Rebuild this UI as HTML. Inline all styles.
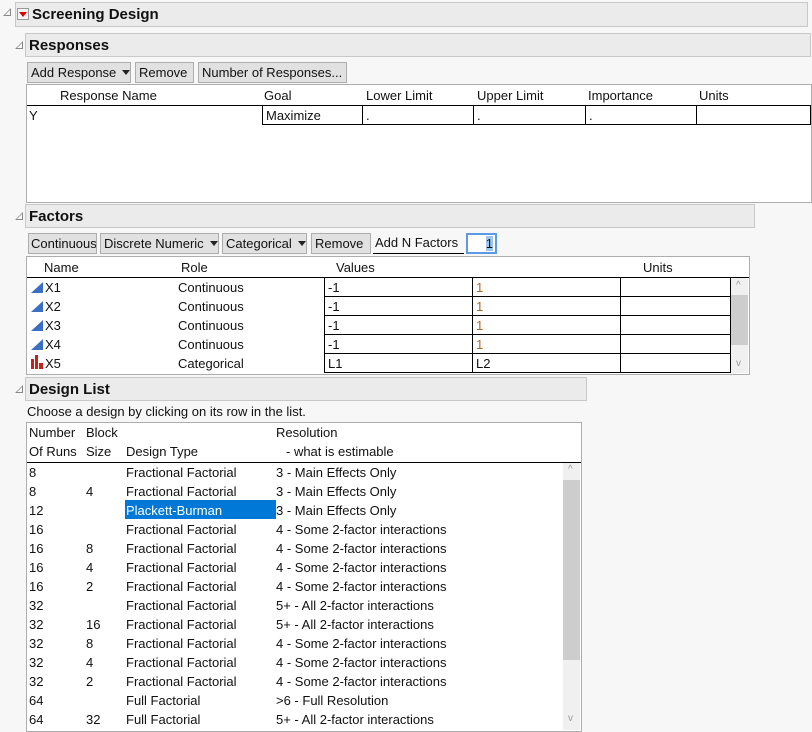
<!DOCTYPE html>
<html><head><style>
*{box-sizing:border-box;margin:0;padding:0}
body{width:812px;height:731px;background:#f7f7f7;font-family:"Liberation Sans",sans-serif;font-size:13px;color:#111;position:relative;overflow:hidden}
.a{position:absolute;white-space:nowrap}
.hdr{position:absolute;background:#ebebeb;border:1px solid #c8c8c8;font-weight:bold;font-size:15px;padding-left:3px;line-height:23px;white-space:nowrap}
.tri{position:absolute;width:0;height:0;border-left:8px solid transparent;border-bottom:8px solid #888}
.tri:after{content:"";position:absolute;left:-6px;top:2px;border-left:5px solid transparent;border-bottom:5px solid #f7f7f7}
.btn{position:absolute;background:#e1e1e1;border:1px solid #adadad;height:21px;line-height:19px;padding:0 3px;white-space:nowrap;overflow:hidden}
.box{position:absolute;background:#fff;border:1px solid #adadad}
.dd:after{content:"";display:inline-block;margin-left:6px;border-left:4px solid transparent;border-right:4px solid transparent;border-top:5px solid #222;vertical-align:2px}
.cell{position:absolute;border:1px solid #000;background:#fff;height:20px;line-height:19px;padding-left:3px}
.hl{position:absolute;height:1px;background:#000}
.o{color:#b5651d}
</style></head><body>

<div class="tri" style="left:3px;top:8px"></div>
<div class="hdr" style="left:15px;top:2px;width:793px;height:25px;padding-left:16px">Screening Design</div>
<div class="a" style="left:17px;top:8px;width:12px;height:12px;border:1px solid #999;background:#f4f4f4"></div>
<div class="a" style="left:19px;top:12px;border-left:4px solid transparent;border-right:4px solid transparent;border-top:5px solid #d00"></div>

<div class="tri" style="left:15px;top:41px"></div>
<div class="hdr" style="left:25px;top:33px;width:786px;height:24px">Responses</div>
<div class="btn dd" style="left:27px;top:62px;width:104px">Add Response</div>
<div class="btn" style="left:135px;top:62px;width:59px">Remove</div>
<div class="btn" style="left:198px;top:62px;width:149px">Number of Responses...</div>
<div class="box" style="left:26px;top:84px;width:786px;height:119px"></div>
<div class="a" style="left:60px;top:88px">Response Name</div>
<div class="a" style="left:264px;top:88px">Goal</div>
<div class="a" style="left:366px;top:88px">Lower Limit</div>
<div class="a" style="left:477px;top:88px">Upper Limit</div>
<div class="a" style="left:588px;top:88px">Importance</div>
<div class="a" style="left:699px;top:88px">Units</div>
<div class="hl" style="left:27px;top:105px;width:784px"></div>
<div class="a" style="left:29px;top:108px">Y</div>
<div class="cell" style="left:262px;top:105px;width:101px">Maximize</div>
<div class="cell" style="left:362px;top:105px;width:112px">.</div>
<div class="cell" style="left:473px;top:105px;width:113px">.</div>
<div class="cell" style="left:585px;top:105px;width:112px">.</div>
<div class="cell" style="left:696px;top:105px;width:115px"></div>

<div class="tri" style="left:15px;top:212px"></div>
<div class="hdr" style="left:25px;top:204px;width:730px;height:24px">Factors</div>
<div class="btn" style="left:28px;top:233px;width:69px;padding:0 2px">Continuous</div>
<div class="btn dd" style="left:100px;top:233px;width:119px">Discrete Numeric</div>
<div class="btn dd" style="left:222px;top:233px;width:85px">Categorical</div>
<div class="btn" style="left:311px;top:233px;width:60px">Remove</div>
<div class="a" style="left:373px;top:233px;width:91px;height:21px;line-height:19px;padding-left:2px;border-bottom:1px solid #000">Add N Factors</div>
<div class="a" style="left:466px;top:233px;width:31px;height:21px;border:2px solid #5a9ae6;background:#fff;text-align:right;line-height:17px;padding-right:2px"><span style="background:#9ec7f0">1</span></div>
<div class="box" style="left:26px;top:256px;width:724px;height:119px"></div>
<div class="a" style="left:44px;top:260px">Name</div>
<div class="a" style="left:181px;top:260px">Role</div>
<div class="a" style="left:336px;top:260px">Values</div>
<div class="a" style="left:643px;top:260px">Units</div>
<div class="hl" style="left:27px;top:277px;width:722px"></div>
<div class="a" style="left:731px;top:278px;width:17px;height:95px;background:#f0f0f0"></div>
<div class="a" style="left:731px;top:295px;width:17px;height:50px;background:#cdcdcd"></div>
<div class="a" style="left:736px;top:280px;color:#999;font-size:10px">^</div>
<div class="a" style="left:736px;top:358px;color:#999;font-size:10px">v</div>

<svg class="a" style="left:30px;top:281px" width="14" height="90">
<polygon points="1,12 13,1 13,12" fill="#3a6fc4"/>
<polygon points="1,31 13,20 13,31" fill="#3a6fc4"/>
<polygon points="1,50 13,39 13,50" fill="#3a6fc4"/>
<polygon points="1,69 13,58 13,69" fill="#3a6fc4"/>
<rect x="1" y="78" width="3" height="10" fill="#c8201a"/><rect x="5" y="74" width="3" height="14" fill="#c8201a"/><rect x="9" y="82" width="4" height="6" fill="#c8201a"/>
</svg>
<div class="a" style="left:45px;top:280px">X1</div>
<div class="a" style="left:45px;top:299px">X2</div>
<div class="a" style="left:45px;top:318px">X3</div>
<div class="a" style="left:45px;top:337px">X4</div>
<div class="a" style="left:45px;top:356px">X5</div>
<div class="a" style="left:178px;top:280px">Continuous</div>
<div class="a" style="left:178px;top:299px">Continuous</div>
<div class="a" style="left:178px;top:318px">Continuous</div>
<div class="a" style="left:178px;top:337px">Continuous</div>
<div class="a" style="left:178px;top:356px">Categorical</div>

<div class="cell" style="left:324px;top:277px;width:149px">-1</div>
<div class="cell o" style="left:472px;top:277px;width:149px">1</div>
<div class="cell" style="left:620px;top:277px;width:111px"></div>
<div class="cell" style="left:324px;top:296px;width:149px">-1</div>
<div class="cell o" style="left:472px;top:296px;width:149px">1</div>
<div class="cell" style="left:620px;top:296px;width:111px"></div>
<div class="cell" style="left:324px;top:315px;width:149px">-1</div>
<div class="cell o" style="left:472px;top:315px;width:149px">1</div>
<div class="cell" style="left:620px;top:315px;width:111px"></div>
<div class="cell" style="left:324px;top:334px;width:149px">-1</div>
<div class="cell o" style="left:472px;top:334px;width:149px">1</div>
<div class="cell" style="left:620px;top:334px;width:111px"></div>
<div class="cell" style="left:324px;top:353px;width:149px">L1</div>
<div class="cell" style="left:472px;top:353px;width:149px">L2</div>
<div class="cell" style="left:620px;top:353px;width:111px"></div>

<div class="tri" style="left:15px;top:385px"></div>
<div class="hdr" style="left:25px;top:377px;width:562px;height:24px">Design List</div>
<div class="a" style="left:27px;top:404px">Choose a design by clicking on its row in the list.</div>
<div class="box" style="left:26px;top:422px;width:556px;height:310px"></div>
<div class="a" style="left:29px;top:425px">Number</div>
<div class="a" style="left:86px;top:425px">Block</div>
<div class="a" style="left:276px;top:425px">Resolution</div>
<div class="a" style="left:29px;top:444px">Of Runs</div>
<div class="a" style="left:86px;top:444px">Size</div>
<div class="a" style="left:126px;top:444px">Design Type</div>
<div class="a" style="left:286px;top:444px">- what is estimable</div>
<div class="hl" style="left:27px;top:462px;width:554px"></div>
<div class="a" style="left:563px;top:463px;width:17px;height:267px;background:#f0f0f0"></div>
<div class="a" style="left:563px;top:480px;width:17px;height:180px;background:#cdcdcd"></div>
<div class="a" style="left:568px;top:464px;color:#999;font-size:10px">^</div>
<div class="a" style="left:568px;top:713px;color:#999;font-size:10px">v</div>
<div class="a" style="left:125px;top:500px;width:151px;height:19px;background:#0078d7"></div>
<div class="a" style="left:29px;top:463px;line-height:19px">8<br>8<br>12<br>16<br>16<br>16<br>16<br>32<br>32<br>32<br>32<br>32<br>64<br>64</div>
<div class="a" style="left:86px;top:463px;line-height:19px">&nbsp;<br>4<br>&nbsp;<br>&nbsp;<br>8<br>4<br>2<br>&nbsp;<br>16<br>8<br>4<br>2<br>&nbsp;<br>32</div>
<div class="a" style="left:126px;top:463px;line-height:19px">Fractional Factorial<br>Fractional Factorial<br><span style="color:#fff">Plackett-Burman</span><br>Fractional Factorial<br>Fractional Factorial<br>Fractional Factorial<br>Fractional Factorial<br>Fractional Factorial<br>Fractional Factorial<br>Fractional Factorial<br>Fractional Factorial<br>Fractional Factorial<br>Full Factorial<br>Full Factorial</div>
<div class="a" style="left:276px;top:463px;line-height:19px">3 - Main Effects Only<br>3 - Main Effects Only<br>3 - Main Effects Only<br>4 - Some 2-factor interactions<br>4 - Some 2-factor interactions<br>4 - Some 2-factor interactions<br>4 - Some 2-factor interactions<br>5+ - All 2-factor interactions<br>5+ - All 2-factor interactions<br>4 - Some 2-factor interactions<br>4 - Some 2-factor interactions<br>4 - Some 2-factor interactions<br>&gt;6 - Full Resolution<br>5+ - All 2-factor interactions</div>
</body></html>
